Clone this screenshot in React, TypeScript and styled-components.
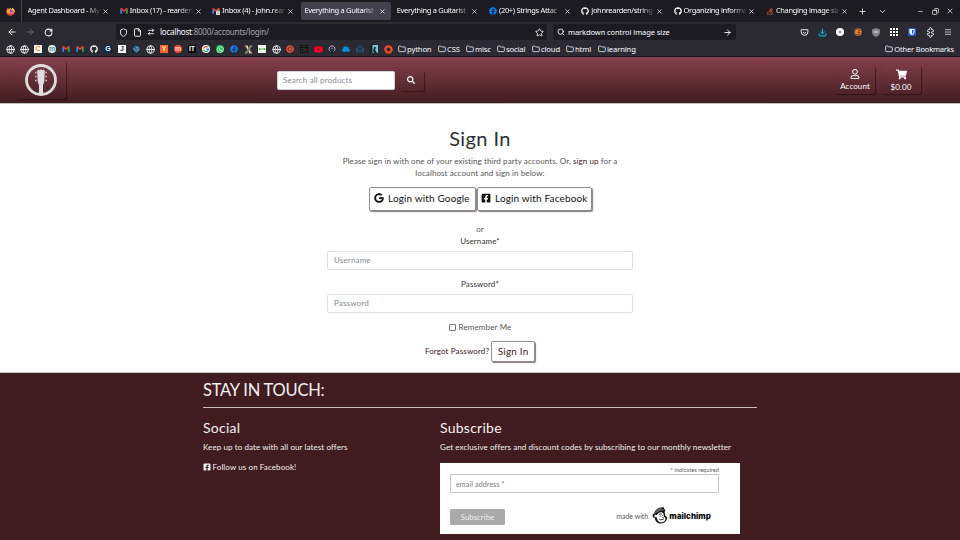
import React from "react";
import styled, { createGlobalStyle, css } from "styled-components";
import {
  FaSearch, FaShoppingCart, FaRegUser, FaGoogle, FaFacebookSquare, FaGithub, FaFacebook,
  FaStackOverflow, FaWhatsapp, FaUbuntu, FaYoutube, FaCloud, FaFingerprint,
} from "react-icons/fa";
import {
  ArrowLeft, ArrowRight, RotateCw, Shield, File, ArrowRightLeft, Star, Search, Folder, Globe,
  Plus, ChevronDown, Minus, Copy, X, Download, Puzzle, Menu,
} from "lucide-react";

const Global = createGlobalStyle`
  * { box-sizing: border-box; }
  body { margin: 0; background: #fff; overflow: hidden; }
  button, input { font: inherit; letter-spacing: inherit; margin: 0; }
`;

const Page = styled.div`
  width: 960px;
  height: 540px;
  display: flex;
  flex-direction: column;
  overflow: hidden;
  font: 8px/12px Lato, "Noto Sans", sans-serif;
  letter-spacing: 0.09px;
  color: #555;
`;

/* Browser window */

const Chrome = styled.div`
  font: 8px/12px "Noto Sans", sans-serif;
  letter-spacing: -0.1px;
  color: #fbfbfe;
  background: #2b2a33;
  height: 57px;
  flex: none;
  border-bottom: 1px solid #17161b;
  svg { display: block; flex: none; }
`;

const TabBar = styled.div`
  height: 22px;
  background: #1c1b22;
  display: flex;
  align-items: center;
`;

const FirefoxSlot = styled.div`
  width: 22px;
  flex: none;
  height: 22px;
  border-right: 1px solid #45444d;
  display: grid;
  place-items: center;
`;

const Tab = styled.div<{ $active?: boolean }>`
  width: 90.3px;
  flex: none;
  height: 18px;
  margin-left: 2px;
  padding: 0 5px 0 3.5px;
  display: flex;
  align-items: center;
  gap: 2px;
  border-radius: 2px;
  ${(p) => p.$active && css`background: #42414d;`}
`;

const TabTitle = styled.span`
  flex: 1;
  min-width: 0;
  font-size: 7.5px;
  line-height: 11px;
  margin-bottom: 1px;
  letter-spacing: -0.32px;
  white-space: nowrap;
  mask-image: linear-gradient(to right, #000 calc(100% - 14px), rgba(0, 0, 0, 0.1));
`;

const WindowControls = styled.div`
  display: grid;
  grid-template-columns: repeat(3, 15px);
  place-items: center;
  margin: 0 2.5px 0 auto;
`;

const TabAction = styled.div`
  width: 20px;
  display: grid;
  place-items: center;
`;

const NavBar = styled.div`
  height: 20px;
  display: flex;
  align-items: center;
`;

const NavButtons = styled.div`
  width: 116px;
  padding-left: 3px;
  display: grid;
  grid-template-columns: repeat(3, 18px);
  place-items: center;
`;

const Field = styled.div<{ $w: number }>`
  width: ${(p) => p.$w}px;
  height: 16px;
  background: #1c1b22;
  border-radius: 2px;
  display: flex;
  align-items: center;
  padding: 0 3px;
  gap: 5px;
  & + & { margin-left: 6px; padding: 0 4px; }
`;

const Address = styled.span`
  flex: 1;
  color: #a4a3aa;
  letter-spacing: -0.23px;
  b { font-weight: 400; color: #fbfbfe; }
`;

const Query = styled.span`
  flex: 1;
  margin-left: -2px;
  font-size: 7.5px;
  letter-spacing: -0.08px;
`;

const Extensions = styled.div`
  flex: 1;
  display: grid;
  grid-template-columns: repeat(9, 18px);
  place-items: center;
  justify-content: end;
  padding-right: 3px;
`;

const Bookmarks = styled.div`
  height: 14px;
  display: flex;
  align-items: center;
  padding: 0 6px 0 3px;
`;

const Sites = styled.div`
  width: 392px;
  flex: none;
  display: grid;
  grid-template-columns: repeat(28, 14px);
  place-items: center;
`;

const Favicon = styled.span<{ $bg: string; $fg?: string; $round?: boolean }>`
  width: 8px;
  height: 8px;
  display: grid;
  place-items: center;
  background: ${(p) => p.$bg};
  color: ${(p) => p.$fg ?? "#fff"};
  border-radius: ${(p) => (p.$round ? "50%" : "0")};
  font: bold 7px/8px "Liberation Sans", sans-serif;
  letter-spacing: 0;
`;

const FolderLink = styled.span<{ $w?: number }>`
  width: ${(p) => (p.$w ? `${p.$w}px` : "auto")};
  padding-left: 3px;
  display: flex;
  align-items: center;
  gap: 1px;
  white-space: nowrap;
  font-size: 7.7px;
  letter-spacing: -0.16px;
`;

const OtherBookmarks = styled(FolderLink)`
  margin-left: auto;
  font-size: 7.5px;
  letter-spacing: -0.18px;
`;

/* Store header */

const Header = styled.header`
  height: 47px;
  flex: none;
  background: linear-gradient(#86414b, #401c21);
  border-bottom: 1px solid #c6bfc0;
  display: flex;
  align-items: flex-start;
  color: #fff;
`;

const raised = css`
  border-radius: 2px;
  box-shadow: 1px 1px 1px rgba(30, 8, 12, 0.55), 0 0 1px rgba(40, 12, 16, 0.3);
`;

const LogoTile = styled.a`
  ${raised}
  width: 50px;
  height: 38px;
  margin: 4px 0 0 16px;
  display: grid;
  place-items: center;
`;

const SearchForm = styled.form`
  margin: 14px 0 0 211px;
  display: flex;
  gap: 5px;
`;

const SearchInput = styled.input`
  width: 118px;
  height: 19px;
  border: 1px solid #ced4da;
  border-radius: 1.5px;
  padding: 0 5px 2px;
  letter-spacing: 0.15px;
  &::placeholder { color: #858c92; opacity: 1; }
`;

const SearchButton = styled.button`
  ${raised}
  width: 24px;
  height: 20px;
  border: 0;
  padding: 0 2px 2px 0;
  background: transparent;
  color: #fff;
  display: grid;
  place-items: center;
`;

const HeaderLinks = styled.nav`
  margin: 9px 39px 0 auto;
  display: flex;
  gap: 6px;
`;

const HeaderLink = styled.a`
  ${raised}
  width: 40px;
  height: 28px;
  padding-top: 3px;
  display: flex;
  flex-direction: column;
  align-items: center;
  gap: 1px;
  line-height: 12px;
`;

/* Sign in form */

const Main = styled.main`
  height: 268px;
  flex: none;
  padding-top: 21px;
  display: flex;
  flex-direction: column;
  align-items: center;
  text-align: center;
`;

const Title = styled.h1`
  margin: 0;
  font-weight: 400;
  font-size: 20px;
  line-height: 26px;
  letter-spacing: 0.4px;
  color: #2c3034;
`;

const Intro = styled.p`
  margin: 4px 0 0;
  width: 306px;
  a { color: #3a2024; }
`;

const outlined = css`
  border: 1px solid #918b8d;
  border-radius: 2px;
  box-shadow: 1px 1px 1px #857c7e;
  background: #fff;
`;

const Providers = styled.div`
  margin-top: 8px;
  display: flex;
  gap: 1px;
`;

const ProviderButton = styled.button<{ $w: number }>`
  ${outlined}
  width: ${(p) => p.$w}px;
  height: 24px;
  padding: 0 0 2px 4px;
  display: flex;
  align-items: center;
  gap: 4.5px;
  color: #111;
  font-size: 10px;
  letter-spacing: 0.14px;
  white-space: nowrap;
`;

const FacebookButton = styled(ProviderButton)`
  padding-left: 3px;
`;

const Or = styled.div`margin-top: 12px;`;

const Label = styled.label<{ $top?: number }>`
  margin-top: ${(p) => p.$top ?? 0}px;
  color: #333;
`;

const TextInput = styled.input`
  width: 306px;
  height: 19px;
  margin-top: 4px;
  border: 1px solid #dcdfe2;
  border-radius: 2px;
  padding: 0 6px 2px;
  letter-spacing: 0.15px;
  &::placeholder { color: #858c92; opacity: 1; }
`;

const Remember = styled.label`
  margin-top: 8px;
  display: flex;
  align-items: center;
  gap: 3px;
  letter-spacing: 0.14px;
`;

const Checkbox = styled.input.attrs({ type: "checkbox" })`
  appearance: none;
  width: 7px;
  height: 7px;
  border: 1px solid #77767a;
  border-radius: 1px;
`;

const Actions = styled.div`
  margin-top: 8px;
  display: flex;
  align-items: center;
  gap: 2px;
  color: #3a2024;
  letter-spacing: 0.13px;
  a { margin-bottom: 2px; }
`;

const SubmitButton = styled.button`
  ${outlined}
  width: 44px;
  height: 21px;
  padding: 0 0 2px;
  font-size: 10px;
  letter-spacing: 0.2px;
  color: #3a1a1f;
`;

/* Footer */

const Footer = styled.footer`
  flex: 1;
  background: #401c21;
  border-top: 1px solid #cbc5c6;
  padding: 6px 203px 0;
  color: #f5f1f1;
`;

const Touch = styled.h2`
  margin: 0;
  padding-bottom: 6px;
  border-bottom: 1px solid #c8bebf;
  font-weight: 400;
  font-size: 16.5px;
  line-height: 22px;
  letter-spacing: -0.23px;
`;

const Columns = styled.div`
  display: grid;
  grid-template-columns: 237px 300px;
  padding-top: 11px;
`;

const ColumnTitle = styled.h3`
  margin: 0;
  font-weight: 400;
  font-size: 14px;
  line-height: 17px;
  letter-spacing: 0.25px;
`;

const Copyline = styled.p<{ $top: number }>`
  margin: ${(p) => p.$top}px 0 0;
  display: flex;
  align-items: center;
  gap: 1.5px;
  white-space: nowrap;
`;

const Newsletter = styled.form`
  margin-top: 10px;
  width: 300px;
  height: 71px;
  background: #fff;
  padding: 3px 21px 0 10px;
  color: #555;
`;

const Required = styled.div`
  font-size: 5.5px;
  line-height: 8px;
  text-align: right;
  b { color: #e85c41; }
`;

const EmailInput = styled.input`
  display: block;
  width: 100%;
  height: 19px;
  border: 1px solid #c6c6c6;
  padding: 0 5px;
  font-size: 7px;
  letter-spacing: 0.16px;
  &::placeholder { color: #777; opacity: 1; }
`;

const NewsletterFoot = styled.div`
  display: flex;
  align-items: flex-start;
  padding-top: 14px;
`;

const SubscribeButton = styled.button`
  width: 55px;
  height: 16px;
  margin-top: 2px;
  border: 0;
  border-radius: 1.5px;
  background: #aaa;
  color: #eee;
  padding: 0;
  font-size: 7.7px;
`;

const MadeWith = styled.div`
  margin-left: auto;
  margin-right: 8px;
  display: flex;
  align-items: center;
  font-size: 7px;
  letter-spacing: 0;
  gap: 4px;
`;

const Wordmark = styled.strong`
  font: 800 8px/12px Inter, sans-serif;
  letter-spacing: 0.05px;
  color: #000;
  margin-left: -3px;
`;

const FirefoxMark = () => (
  <svg width="9" height="9" viewBox="0 0 18 18">
    <path d="M2 5l1-3 3 2 3-3c1 2 2 3 3 3l1-2c3 2 5 5 4 8a8.200 8.200 0 0 1-16 1c-.5-3 0-5 1-6z" fill="#ff8a28" />
    <path d="M12 4c3 1 5 4 4 7l1-3c0-3-2-5-4-6z" fill="#ffe14a" />
    <path d="M1 11c1 4 4 6 8 6s7-2 8-6c-3 3-6 3-9 3s-5-1-7-3z" fill="#ed3158" />
    <circle cx="9" cy="9" r="3.800" fill="#8a45d8" />
    <path d="M4 7c2-2 4-1 5 0L7 9c1 2 3 2 4 2-3 3-7 0-7-4z" fill="#ffb62e" />
  </svg>
);

const GmailMark = () => (
  <svg width="8" height="8" viewBox="0 0 24 24">
    <path d="M1 20V6l5 4v10z" fill="#4285f4" />
    <path d="M23 20V6l-5 4v10z" fill="#34a853" />
    <path d="M1 6c0-3 3-4 5-2l6 5 6-5c2-2 5-1 5 2l-11 9z" fill="#ea4335" />
  </svg>
);

const GmailBadgeMark = () => (
  <svg width="8" height="8" viewBox="0 0 24 24">
    <path d="M1 20V6l5 4v10z" fill="#4285f4" />
    <path d="M23 20V6l-5 4v10z" fill="#34a853" />
    <path d="M1 6c0-3 3-4 5-2l6 5 6-5c2-2 5-1 5 2l-11 9z" fill="#ea4335" />
    <rect x="12" y="11" width="12" height="13" rx="2" fill="#e8e8e8" />
    <path d="M15 15h6m-6 5h6" stroke="#777" strokeWidth="2" />
  </svg>
);

const GuitarMark = () => (
  <svg width="34" height="34" viewBox="0 0 34 34">
    <circle cx="17" cy="17" r="14.5" fill="none" stroke="#ddd" strokeWidth="2.8" />
    <path d="M13.200 8l1-1.500 1.300.7L17 6.300l1.500.9 1.300-.7 1 1.500-.5 11-1.300 3V31h-4v-9l-1.300-3z" fill="#dedede" />
    <path d="M11 9.500h1.500m-1.500 4h1.500m-1.500 4h1.500m9-8H23m-1.500 4H23m-1.500 4H23" stroke="#d5d0d0" strokeWidth="1.500" />
  </svg>
);

const MonkeyMark = () => (
  <svg width="16" height="17" viewBox="0 0 32 34">
    <path d="M5 21C0 21 0 15 4 13 6 6 13 0 20 1c4-1 5 1 4 3 3 1 3 4 1 6 1 3 1 5 2 8 4 2 4 5 2 8-2 5-7 7-12 7-7 0-10-5-12-12z" fill="#111" />
    <path d="M12 13c4-4 10-3 11 1l1 6 2 1c2 2 1 5-1 7-5 5-12 3-14-2l-2-6c-4 2-6-3-2-5l3 1z" fill="#fff" />
    <path d="M14 15c2-2 4-1 6-1m-4 4h2m3-1h1m-1 3 2 2m-9 2c4 3 8 1 10-1" fill="none" stroke="#111" strokeWidth="1.700" />
    <path d="M5 13c3-5 8-9 14-10M9 11c4-4 9-6 14-5" fill="none" stroke="#fff" strokeWidth="1" />
  </svg>
);

const PocketMark = () => (
  <svg width="9" height="9" viewBox="0 0 16 16" fill="none" stroke="currentColor" strokeWidth="1.600">
    <path d="M2 3h12v4a6 6 0 0 1-12 0zM5 7l3 3 3-3" />
  </svg>
);

const AppsMark = () => (
  <svg width="8" height="8" viewBox="0 0 8 8" fill="#fff">
    {[0, 3, 6].map((y) => [0, 3, 6].map((x) => <rect key={`${x}-${y}`} x={x} y={y} width="2" height="2" />))}
  </svg>
);

const DiscMark = () => (
  <svg width="8" height="8" viewBox="0 0 16 16">
    <circle cx="8" cy="8" r="8" fill="#fff" />
    <circle cx="8" cy="8" r="2.500" fill="#8c8c8c" />
  </svg>
);

const SwirlMark = () => (
  <svg width="8" height="8" viewBox="0 0 16 16">
    <circle cx="8" cy="8" r="7.500" fill="#f08a30" />
    <path d="M15 4L8 7v3l5-1M11 3a6 6 0 1 0 2 7" fill="none" stroke="#51301d" strokeWidth="1.600" />
  </svg>
);

const VaultMark = () => (
  <svg width="8" height="8" viewBox="0 0 16 16">
    <rect width="16" height="16" rx="2" fill="#175ddc" />
    <path d="M3 2h10v6c0 3-2 5-5 6-3-1-5-3-5-6z" fill="#fff" />
    <path d="M8 4h3v4c0 2-1 3-3 4z" fill="#175ddc" />
  </svg>
);

const BlockerMark = () => (
  <svg width="8" height="9" viewBox="0 0 16 18">
    <path d="M8 0l8 3v5c0 5-3 8-8 10C3 16 0 13 0 8V3z" fill="#858585" />
    <path d="M4 6h8v4H4z" fill="#bbb" />
  </svg>
);

const ExtensionMark = () => (
  <Puzzle size={9} strokeWidth={2.4} transform="rotate(-45)" />
);

const ScopeMark = () => (
  <svg width="8" height="8" viewBox="0 0 16 16">
    <rect width="16" height="16" fill="#f4f4ee" />
    <path d="M1 8h14M3 6v4m10-4v4" stroke="#62b33c" strokeWidth="2" />
  </svg>
);

const CrossMark = () => (
  <svg width="9" height="9" viewBox="0 0 16 16" strokeWidth="2.500">
    <path d="M2 1l12 14" stroke="#d6775e" /><path d="M14 1L2 15" stroke="#78a94c" />
    <path d="M5 1l6 14" stroke="#ddd" /><path d="M11 1L5 15" stroke="#777" />
  </svg>
);

const GoogleMark = () => (
  <svg width="8" height="8" viewBox="0 0 16 16" fill="none" strokeWidth="2.500">
    <circle cx="8" cy="8" r="8" fill="#fff" />
    <path d="M11.500 4.500A5 5 0 0 0 3.600 6" stroke="#ea4335" />
    <path d="M3.600 6a5 5 0 0 0 0 4" stroke="#fbbc05" />
    <path d="M3.600 10a5 5 0 0 0 8 1.500" stroke="#34a853" />
    <path d="M11.500 11.500A5 5 0 0 0 13 8H8" stroke="#4285f4" />
  </svg>
);

const TerminalMark = () => (
  <svg width="8" height="8" viewBox="0 0 16 16" fill="none" stroke="#111114" strokeWidth="2">
    <path d="M1 1h14v14H1zM1 5h14M4 8l3 2-3 2m5 0h4" />
  </svg>
);

const GaugeMark = () => (
  <svg width="8" height="8" viewBox="0 0 16 16">
    <circle cx="8" cy="8" r="8" fill="#17182c" />
    <path d="M5 13a6 6 0 1 1 6 0M8 9V5" fill="none" stroke="#ddd" strokeWidth="1.800" />
  </svg>
);

const EnvelopeMark = () => (
  <svg width="8" height="8" viewBox="0 0 16 16" fill="none" stroke="#285684" strokeWidth="2">
    <path d="M1 7l7-5 7 5v7H1zl7 4 7-4" />
  </svg>
);

const FigureMark = () => (
  <svg width="8" height="8" viewBox="0 0 16 16">
    <rect width="16" height="16" fill="#7cc5d5" />
    <path d="M0 0h5v16H0zM9 3l3 2-2 5 4 6H8l-2-5z" fill="#10242b" />
  </svg>
);

const RingMark = () => (
  <svg width="9" height="9" viewBox="0 0 16 16">
    <circle cx="8" cy="8" r="5.500" fill="none" stroke="#f04b23" strokeWidth="4" />
  </svg>
);

const WebIcon = () => <Globe size={9} strokeWidth={2.3} />;

const sites = [
  <WebIcon />, <WebIcon />,
  <Favicon $bg="#fff" $fg="#e88332">C</Favicon>,
  <Favicon $bg="#e7f0ef" $fg="#57918d" $round>m</Favicon>,
  <GmailMark />, <GmailMark />,
  <FaGithub size={8} />,
  <Favicon $bg="#082a4d">G</Favicon>,
  <Favicon $bg="#fff" $fg="#23286d">J</Favicon>,
  <Favicon $bg="#0e2b44" $fg="#77a3bd"><FaFingerprint size={7} /></Favicon>,
  <WebIcon />,
  <Favicon $bg="#ff6328" $fg="#ffe0d0">Y</Favicon>,
  <Favicon $bg="#f34c27" $fg="#ffd5c8" $round>m</Favicon>,
  <Favicon $bg="#000">IT</Favicon>,
  <GoogleMark />,
  <Favicon $bg="#25c35a" $round><FaWhatsapp size={7} /></Favicon>,
  <FaFacebook size={8} color="#0d7ff0" />,
  <CrossMark />, <ScopeMark />, <WebIcon />,
  <FaUbuntu size={8} color="#e95432" />,
  <TerminalMark />,
  <FaYoutube size={9} color="#ff0020" />,
  <GaugeMark />,
  <FaCloud size={8} color="#0b8edb" />,
  <EnvelopeMark />, <FigureMark />, <RingMark />,
];

const folders: [string, number][] = [
  ["python", 40], ["CSS", 28], ["misc", 31], ["social", 35], ["cloud", 34], ["html", 32], ["learning", 40],
];

const tabs: { title: string; icon?: React.ReactNode; active?: boolean }[] = [
  { title: "Agent Dashboard - My" },
  { title: "Inbox (17) - rearden", icon: <GmailMark /> },
  { title: "Inbox (4) - john.rear", icon: <GmailBadgeMark /> },
  { title: "Everything a Guitarist", active: true },
  { title: "Everything a Guitarist" },
  { title: "(20+) Strings Attac", icon: <FaFacebook size={8} color="#0d7ff0" /> },
  { title: "johnrearden/string", icon: <FaGithub size={8} /> },
  { title: "Organizing informa", icon: <FaGithub size={8} /> },
  { title: "Changing image siz", icon: <FaStackOverflow size={8} color="#d95927" /> },
];

export default function App() {
  return (
    <Page>
      <Global />
      <Chrome>
        <TabBar>
          <FirefoxSlot><FirefoxMark /></FirefoxSlot>
          {tabs.map((tab, i) => (
            <Tab key={i} $active={tab.active}>
              {tab.icon}
              <TabTitle>{tab.title}</TabTitle>
              <X size={7} strokeWidth={2.5} />
            </Tab>
          ))}
          <TabAction><Plus size={9} /></TabAction>
          <TabAction><ChevronDown size={9} /></TabAction>
          <WindowControls>
            <Minus size={7} /><Copy size={7} strokeWidth={2.5} transform="scale(-1 1)" /><X size={8} />
          </WindowControls>
        </TabBar>
        <NavBar>
          <NavButtons>
            <ArrowLeft size={10} strokeWidth={2.4} />
            <ArrowRight size={10} color="#73727a" />
            <RotateCw size={9} strokeWidth={2.7} />
          </NavButtons>
          <Field $w={431}>
            <Shield size={9} strokeWidth={2.3} />
            <File size={9} strokeWidth={2.5} />
            <ArrowRightLeft size={8} strokeWidth={2.5} />
            <Address><b>localhost</b>:8000/accounts/login/</Address>
            <Star size={9} strokeWidth={2.3} />
          </Field>
          <Field $w={183}>
            <Search size={8} strokeWidth={2.7} />
            <Query>markdown control image size</Query>
            <ArrowRight size={9} strokeWidth={2.4} />
          </Field>
          <Extensions>
            <PocketMark />
            <Download size={9} color="#16aac4" strokeWidth={2.8} />
            <DiscMark />
            <SwirlMark />
            <BlockerMark />
            <AppsMark />
            <VaultMark />
            <ExtensionMark />
            <Menu size={8} />
          </Extensions>
        </NavBar>
        <Bookmarks>
          <Sites>{sites.map((icon, i) => <React.Fragment key={i}>{icon}</React.Fragment>)}</Sites>
          {folders.map(([name, width]) => (
            <FolderLink key={name} $w={width}><Folder size={8} strokeWidth={2.3} />{name}</FolderLink>
          ))}
          <OtherBookmarks><Folder size={8} strokeWidth={2.3} />Other Bookmarks</OtherBookmarks>
        </Bookmarks>
      </Chrome>
      <Header>
        <LogoTile><GuitarMark /></LogoTile>
        <SearchForm>
          <SearchInput placeholder="Search all products" />
          <SearchButton type="button"><FaSearch size={8} /></SearchButton>
        </SearchForm>
        <HeaderLinks>
          <HeaderLink><FaRegUser size={10} />Account</HeaderLink>
          <HeaderLink><FaShoppingCart size={11} />$0.00</HeaderLink>
        </HeaderLinks>
      </Header>
      <Main>
        <Title>Sign In</Title>
        <Intro>
          Please sign in with one of your existing third party accounts. Or, <a>sign up</a> for a<br />
          localhost account and sign in below:
        </Intro>
        <Providers>
          <ProviderButton $w={107}><FaGoogle size={10} />Login with Google</ProviderButton>
          <FacebookButton $w={115}><FaFacebookSquare size={10} />Login with Facebook</FacebookButton>
        </Providers>
        <Or>or</Or>
        <Label>Username*</Label>
        <TextInput placeholder="Username" />
        <Label $top={8}>Password*</Label>
        <TextInput placeholder="Password" />
        <Remember><Checkbox />Remember Me</Remember>
        <Actions><a>Forgot Password?</a><SubmitButton>Sign In</SubmitButton></Actions>
      </Main>
      <Footer>
        <Touch>STAY IN TOUCH:</Touch>
        <Columns>
          <section>
            <ColumnTitle>Social</ColumnTitle>
            <Copyline $top={5}>Keep up to date with all our latest offers</Copyline>
            <Copyline $top={8}><FaFacebookSquare size={8} />Follow us on Facebook!</Copyline>
          </section>
          <section>
            <ColumnTitle>Subscribe</ColumnTitle>
            <Copyline $top={5}>Get exclusive offers and discount codes by subscribing to our monthly newsletter</Copyline>
            <Newsletter>
              <Required><b>*</b> indicates required</Required>
              <EmailInput placeholder="email address *" />
              <NewsletterFoot>
                <SubscribeButton type="button">Subscribe</SubscribeButton>
                <MadeWith>made with <MonkeyMark /><Wordmark>mailchimp</Wordmark></MadeWith>
              </NewsletterFoot>
            </Newsletter>
          </section>
        </Columns>
      </Footer>
    </Page>
  );
}
